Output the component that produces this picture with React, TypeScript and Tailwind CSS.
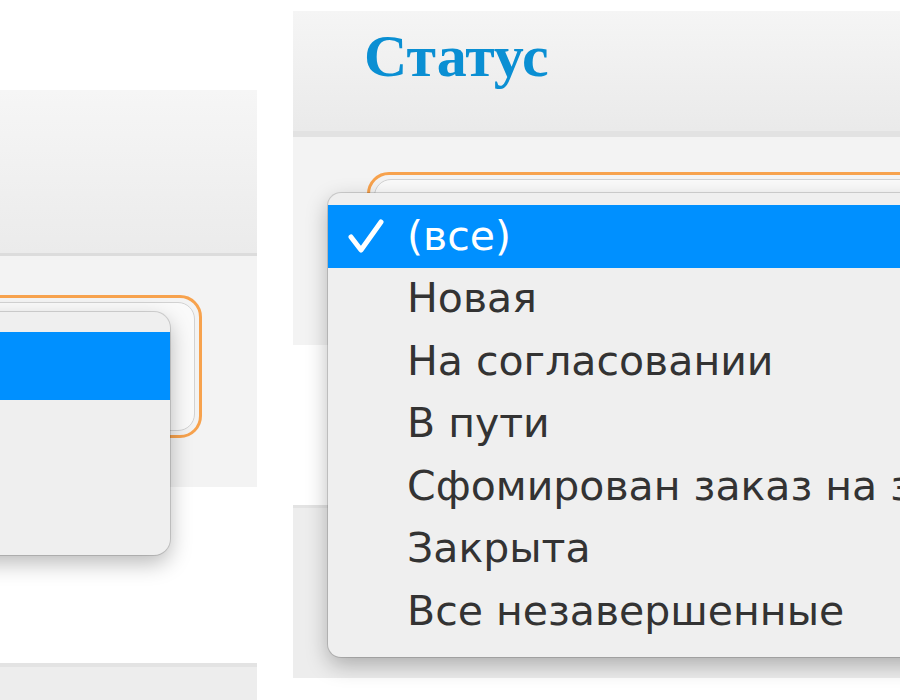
import React from 'react';

const statuses = [
  'Новая',
  'На согласовании',
  'В пути',
  'Сфомирован заказ на закупку',
  'Закрыта',
  'Все незавершенные',
];

const CheckMark: React.FC = () => (
  <svg width="38" height="36" viewBox="0 0 38 36" className="shrink-0">
    <path d="M4 19 L14 32 L34 4" fill="none" stroke="white" strokeWidth="5" strokeLinecap="round" strokeLinejoin="round" />
  </svg>
);

const App: React.FC = () => {
  return (
    <div className="w-[900px] h-[700px] bg-white overflow-hidden flex">
      {/* Left panel (cut off) */}
      <div className="w-[257px] shrink-0 pt-[90px] flex flex-col relative">
        <div className="h-[166px] bg-gradient-to-b from-[#f6f6f6] to-[#ebebeb] border-b-[3px] border-[#dcdcdc]" />
        <div className="h-[231px] bg-[#f3f3f3] pt-[39px]">
          <div className="w-[302px] -ml-[100px] h-[143px] rounded-[22px] border-[3px] border-[#f7a24d] p-[4px]">
            <div className="h-full rounded-[17px] border border-[#d2d2d2] bg-[#fafafa]" />
          </div>
        </div>
        <div className="h-[176px] bg-white" />
        <div className="flex-1 bg-[#ededed] border-t-[4px] border-[#e3e3e3]" />

        <div className="absolute top-[312px] left-[-200px] w-[370px] h-[243px] rounded-[16px] bg-[#efefef] pt-[20px] shadow-[0_8px_22px_rgba(0,0,0,0.28),0_0_0_1px_rgba(0,0,0,0.14)]">
          <div className="h-[68px] bg-[#0090ff]" />
        </div>
      </div>

      {/* Right panel */}
      <div className="w-[607px] shrink-0 ml-[36px] pt-[11px] flex flex-col relative">
        <div className="h-[126px] bg-gradient-to-b from-[#f5f5f5] to-[#eaeaea] border-b-[6px] border-[#e2e2e2] pl-[71px] pt-[15px]">
          <span className="text-[60px] leading-[60px] font-bold text-[#0a8fd3] font-['Liberation_Serif',serif]">
            Статус
          </span>
        </div>
        <div className="h-[208px] bg-[#f3f3f3] pt-[35px] pl-[74px]">
          <div className="w-[700px] h-[140px] rounded-[22px] border-[3px] border-[#f7a24d] p-[4px]">
            <div className="h-full rounded-[17px] border border-[#d2d2d2] bg-[#fafafa]" />
          </div>
        </div>
        <div className="h-[160px] bg-white" />
        <div className="h-[173px] bg-[#ededed] border-t-[3px] border-[#e3e3e3]" />

        <div className="absolute top-[193px] left-[35px] w-[700px] h-[464px] rounded-[13px] bg-[#efefef] pt-[12px] shadow-[0_8px_22px_rgba(0,0,0,0.28),0_0_0_1px_rgba(0,0,0,0.14)] font-['DejaVu_Sans',sans-serif] text-[41px]">
          <div className="h-[62.5px] bg-[#0090ff] flex items-center pl-[19px] text-white">
            <CheckMark />
            <span className="ml-[22px]">(все)</span>
          </div>
          {statuses.map((s) => (
            <div key={s} className="h-[62.5px] flex items-center pl-[79px] text-[#333333] whitespace-nowrap">
              {s}
            </div>
          ))}
        </div>
      </div>
    </div>
  );
};

export default App;
